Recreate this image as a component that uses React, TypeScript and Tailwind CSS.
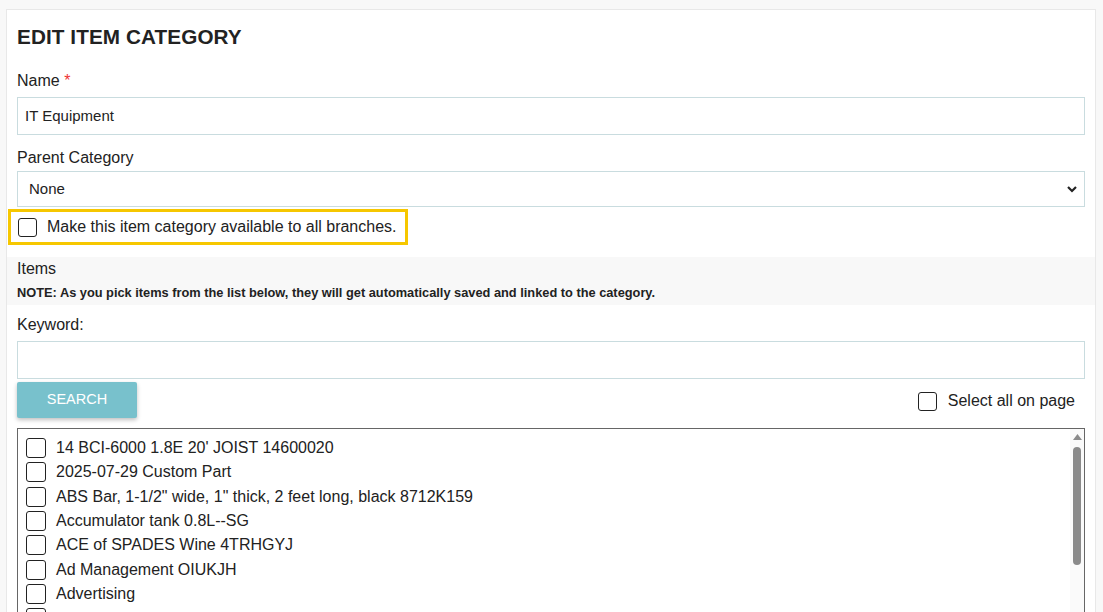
import React from 'react';

const ITEMS = [
  '14 BCI-6000 1.8E 20\' JOIST 14600020',
  '2025-07-29 Custom Part',
  'ABS Bar, 1-1/2" wide, 1" thick, 2 feet long, black 8712K159',
  'Accumulator tank 0.8L--SG',
  'ACE of SPADES Wine 4TRHGYJ',
  'Ad Management OIUKJH',
  'Advertising',
  '',
];

function Box({ size = 'w-5 h-5' }: { size?: string }) {
  return <span className={`${size} shrink-0 rounded-[3px] border border-[#222] bg-white`} />;
}

export default function App() {
  return (
    <div
      className="h-[612px] overflow-hidden bg-[#f8f8f8] pl-[6px] pr-[7px] pt-[9px] text-[#222]"
      style={{ fontFamily: '"Liberation Sans", Arial, sans-serif' }}
    >
      <div className="h-[620px] border border-[#e8e8e8] bg-white">
        <div className="px-[10px] pt-[13px]">
          <h1 className="text-[20.7px] font-bold leading-[28px] tracking-[0.1px]">EDIT ITEM CATEGORY</h1>

          <div className="mt-[20px] text-[16px] leading-[20px]">
            Name <span className="text-[#e33]">*</span>
          </div>
          <div className="mt-[6px] flex h-[38px] items-center border border-[#c9dcdf] px-[7px] text-[15px]">
            IT Equipment
          </div>

          <div className="mt-[13px] text-[16px] leading-[20px]">Parent Category</div>
          <div className="mt-[3px] flex h-[36px] items-center justify-between border border-[#c9dcdf] pl-[11px] pr-[6px] text-[15px]">
            <span>None</span>
            <svg width="12" height="12" viewBox="0 0 12 12">
              <path d="M2 4l4 4 4-4" fill="none" stroke="#222" strokeWidth="2.2" />
            </svg>
          </div>
        </div>

        <div className="ml-[1px] mt-[2px] inline-flex h-[36px] items-center gap-[10px] border-[3px] border-[#f6c700] pl-[7px] pr-[8px] text-[16px]">
          <Box size="w-[19px] h-[19px]" />
          <span>Make this item category available to all branches.</span>
        </div>

        <div className="mt-[12px] h-[48px] bg-[#f8f8f8] px-[10px] pt-[2px]">
          <div className="text-[16px] leading-[20px]">Items</div>
          <div className="mt-[6px] text-[12.8px] font-bold leading-[16px]">
            NOTE: As you pick items from the list below, they will get automatically saved and linked to the
            category.
          </div>
        </div>

        <div className="px-[10px]">
          <div className="mt-[10px] text-[16px] leading-[20px]">Keyword:</div>
          <div className="mt-[6px] h-[38px] border border-[#c9dcdf]" />
          <div className="mt-[3px] flex items-center justify-between">
            <button className="h-[36px] w-[120px] rounded-[2px] bg-[#78c1cc] text-[14.5px] text-white shadow-[0_2px_4px_rgba(0,0,0,0.25)]">
              SEARCH
            </button>
            <div className="mr-[10px] mt-[2px] flex items-center gap-[11px] text-[16px]">
              <Box size="w-[19px] h-[19px]" />
              <span>Select all on page</span>
            </div>
          </div>

          <div className="mt-[10px] flex h-[200px] border border-[#666]">
            <div className="flex-1 pl-[8px] pt-[7px]">
              {ITEMS.map((item, i) => (
                <div key={i} className="flex h-[24.3px] items-center gap-[10px] text-[16px]">
                  <Box />
                  <span>{item}</span>
                </div>
              ))}
            </div>
            <div className="flex w-[14px] flex-col items-center bg-[#fafafa] pt-[5px]">
              <svg width="9" height="6" viewBox="0 0 9 6">
                <path d="M4.5 0L9 6H0z" fill="#8a8a8a" />
              </svg>
              <div className="mt-[7px] h-[118px] w-[8px] rounded-full bg-[#8a8a8a]" />
            </div>
          </div>
        </div>
      </div>
    </div>
  );
}
